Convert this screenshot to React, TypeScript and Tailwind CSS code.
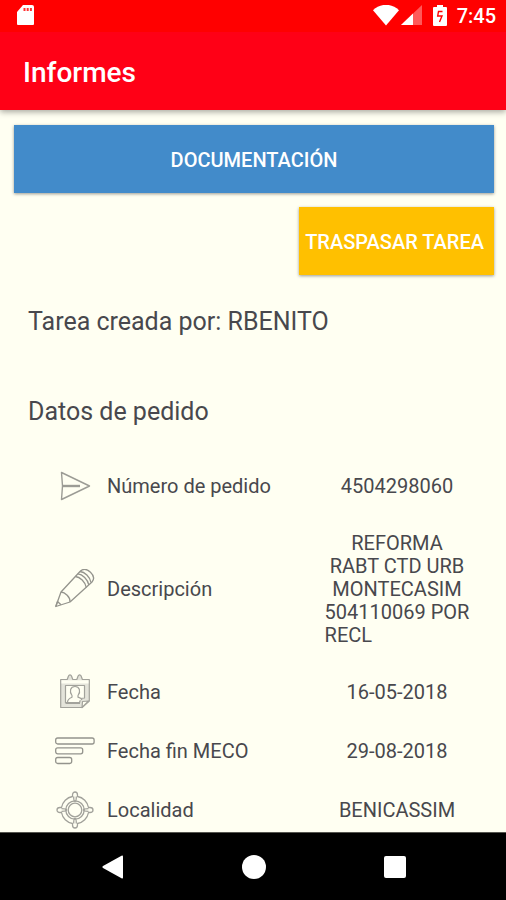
import type { ReactNode } from "react";

type Field = {
  label: string;
  lines: string[];
  icon: ReactNode;
};

const SendIcon = () => (
  <svg viewBox="0 0 40 40" className="size-10" fill="none" stroke="#9c9c95" strokeWidth="1.4" strokeLinejoin="round">
    <path d="M6.500 6.500 34.500 20 6.500 33.500 7.500 20Z" />
    <path d="M8 20h17" strokeWidth="2.400" />
  </svg>
);

const PencilIcon = () => (
  <svg viewBox="0 0 40 40" className="size-10" fill="none" stroke="#94948d" strokeWidth="1.3" strokeLinejoin="round">
    <path d="M.8 37.500 6 23 25 2.500C28-.5 32 0 35.500 3.200 39 6.500 39.500 10 37 13L15 33Z" />
    <path d="M6 23c4 0 9.500 5.500 9 10M.8 37.500l1.700-5 3.500 3.300" />
    <path d="M20.300 7.500c4.700.3 10 5.500 11 11M22.800 4.900c4.700.3 10 5.500 11 11M25 2.500c4.700.3 10 5.500 11 11" />
  </svg>
);

const CalendarIcon = () => (
  <svg viewBox="0 0 40 40" className="size-10" fill="none" stroke="#a2a29b" strokeWidth="1.2" strokeLinejoin="round">
    <path fill="#e4e4da" d="M5.700 7.500h6.500l1.300-3.500c.6-1.600 2.400-1.600 3 0l1.300 3.500h4l1.300-3.500c.6-1.600 2.400-1.600 3 0l1.300 3.500h6.900v21.500L27 35.500H5.700Z" />
    <path fill="#fffff2" stroke="none" d="M6.500 8.300h27v3.200h-27Z" />
    <path fill="#fffff2" d="M10.500 13.500h19v12.500l-4 .5-1 4.500h-14Z" />
    <path fill="#fffff2" d="M12.500 30c.3-3 2.300-4 4.500-4.800v-1.700c-3-4-1.700-9 3-9s6 5 3 9v1.700c2 .5 3.500 1.300 4 2.800" />
    <path fill="#fffff2" d="M27 35.500l.5-6 6.100-.5Z" />
    <path d="M11 31h14" strokeWidth="2" />
  </svg>
);

const BarsIcon = () => (
  <svg viewBox="0 0 40 40" className="size-10" fill="none" stroke="#94948d" strokeWidth="1.300">
    <rect x=".7" y="7" width="38.400" height="6" rx="2" />
    <rect x=".7" y="16.800" width="27" height="6" rx="2" />
    <rect x=".7" y="26.500" width="16" height="6" rx="2" />
  </svg>
);

const TargetIcon = () => (
  <svg viewBox="0 0 40 40" className="size-10" fill="none" stroke="#a2a29b" strokeWidth="1.300" strokeLinejoin="round">
    <circle cx="20" cy="20" r="6.800" />
    <circle cx="20" cy="20" r="9.200" />
    <path d="M17.500 6.500V5c0-4 5-4 5 0v1.500A13.500 13.500 0 0 1 33.500 17.500H35c4 0 4 5 0 5h-1.500A13.500 13.500 0 0 1 22.500 33.500V35c0 4-5 4-5 0v-1.500A13.500 13.500 0 0 1 6.500 22.500H5c-4 0-4-5 0-5h1.500A13.500 13.500 0 0 1 17.500 6.500Z" />
    <path d="M18.700 6.500c0 4 .3 5 1.300 5s1.300-1 1.300-5M18.700 33.500c0-4 .3-5 1.300-5s1.300 1 1.300 5M6.500 18.700c4 0 5 .3 5 1.300s-1 1.300-5 1.300M33.500 18.700c-4 0-5 .3-5 1.300s1 1.300 5 1.300" />
  </svg>
);

const fields: Field[] = [
  { label: "Número de pedido", lines: ["4504298060"], icon: <SendIcon /> },
  {
    label: "Descripción",
    lines: ["REFORMA", "RABT CTD URB", "MONTECASIM", "504110069 POR", "RECL"],
    icon: <PencilIcon />,
  },
  { label: "Fecha", lines: ["16-05-2018"], icon: <CalendarIcon /> },
  { label: "Fecha fin MECO", lines: ["29-08-2018"], icon: <BarsIcon /> },
  { label: "Localidad", lines: ["BENICASSIM"], icon: <TargetIcon /> },
];

const StatusBar = () => (
  <div className="flex h-8 items-center justify-between bg-[#ff0000] pl-4 pr-[10px] text-white">
    <svg viewBox="0 0 18 22" className="h-[22px] w-[18px]">
      <path fill="#fff" d="M7 0h9a2 2 0 0 1 2 2v17a1 1 0 0 1-1 1H2a1 1 0 0 1-1-1V7Z" />
      <path fill="#ff0000" fillOpacity=".8" d="M7.500 3h2v3h-2zM10.700 3h2v3h-2zM13.900 3h2v3h-2z" />
    </svg>
    <div className="flex items-center">
      <svg viewBox="0 0 26 22" className="h-[22px] w-[26px]">
        <path fill="#fff" d="M0 5.200C7-2 19-2 26 5.200L13 20.500Z" />
      </svg>
      <svg viewBox="0 0 21 22" className="ml-[2px] h-[22px] w-[21px]">
        <path fill="#fff" fillOpacity=".35" d="M21 0v20H0Z" />
        <path fill="#fff" d="M12 8.500V20H0Z" />
      </svg>
      <svg viewBox="0 0 14 22" className="ml-[11px] h-[22px] w-[14px]">
        <path fill="#fff" d="M4 0h6v2h3a1 1 0 0 1 1 1v17a1 1 0 0 1-1 1H1a1 1 0 0 1-1-1V3a1 1 0 0 1 1-1h3Z" />
        <path fill="none" stroke="#ff0000" strokeWidth="1.400" d="M9.500 6.500H5.500L4.700 11H9L6.500 17" />
      </svg>
      <span className="ml-[10px] text-xl font-medium leading-8">7:45</span>
    </div>
  </div>
);

const NavBar = () => (
  <nav className="flex h-[68px] shrink-0 items-center justify-center gap-[93px] border-t border-[#55554f] bg-black pl-[2px]">
    <button type="button" aria-label="Atrás" className="flex size-12 items-center justify-center">
      <svg viewBox="0 0 24 24" className="size-6" fill="#fff">
        <path d="M22 1.500v21q0 1.500-1.500.8L2 13q-1.500-1 0-2L20.500.7q1.500-.7 1.500.8Z" />
      </svg>
    </button>
    <button type="button" aria-label="Inicio" className="flex size-12 items-center justify-center">
      <span className="size-6 rounded-full bg-white" />
    </button>
    <button type="button" aria-label="Recientes" className="flex size-12 items-center justify-center">
      <span className="size-[22px] rounded-xs bg-white" />
    </button>
  </nav>
);

const App = () => {
  return (
    <div className="flex h-screen flex-col overflow-hidden bg-[#fffff2] font-['Roboto',sans-serif] text-[#48484d]">
      <header className="relative shrink-0 shadow-[0_2px_6px_rgba(0,0,0,0.35)]">
        <StatusBar />
        <div className="flex h-[78px] items-center bg-[#ff0016] px-[23px] pt-1">
          <h1 className="text-[28px] font-medium leading-8 text-white">Informes</h1>
        </div>
      </header>

      <main className="min-h-0 flex-1 overflow-hidden pt-[15px]">
        <div className="flex flex-col items-end gap-[14px] pl-[14px] pr-3 text-xl font-medium text-white">
          <button type="button" className="h-[68px] w-full bg-[#428bca] pt-[2px] shadow-[0_1px_3px_rgba(0,0,0,0.4)]">
            DOCUMENTACIÓN
          </button>
          <button type="button" className="h-[68px] bg-[#ffc000] pl-1.5 pr-2.5 pt-[2px] shadow-[0_1px_3px_rgba(0,0,0,0.4)]">
            TRASPASAR TAREA
          </button>
        </div>

        <p className="mt-8 px-7 text-[25px] leading-[30px]">Tarea creada por: RBENITO</p>
        <h2 className="mb-[30px] mt-[60px] px-7 text-[25px] leading-[30px]">Datos de pedido</h2>

        <dl className="pl-[55px] pr-9 text-xl leading-[23px]">
          {fields.map((field) => (
            <div key={field.label} className="flex min-h-[59px] items-center py-4">
              <dt className="flex flex-1 items-center gap-3">
                <span className="-mb-[11px] -mt-[13px]">{field.icon}</span>
                {field.label}
              </dt>
              <dd className="flex w-[146px] justify-center text-center">
                <div>
                  {field.lines.map((line) => (
                    <span key={line} className="block last:text-left">
                      {line}
                    </span>
                  ))}
                </div>
              </dd>
            </div>
          ))}
        </dl>
      </main>

      <NavBar />
    </div>
  );
};

export default App;
